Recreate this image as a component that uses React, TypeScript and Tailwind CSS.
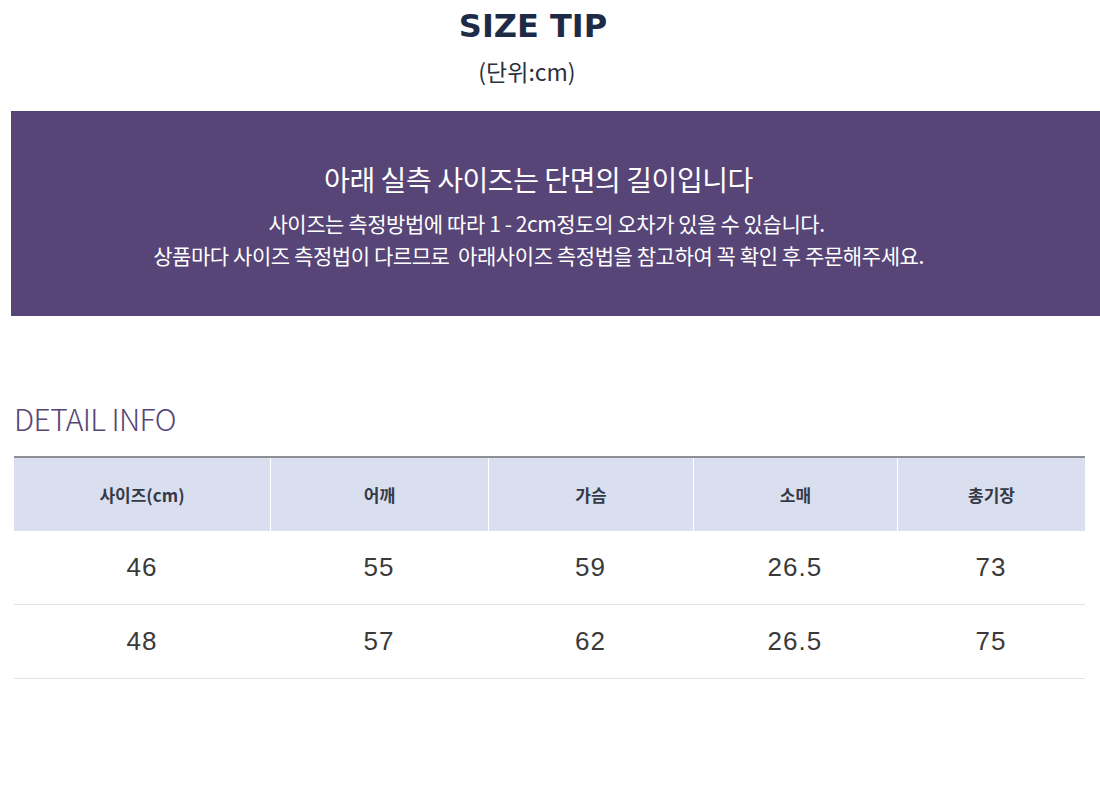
import React from "react";

const KR = "font-['Noto_Sans_CJK_KR','Noto_Sans',sans-serif]";

const headers = ["사이즈(cm)", "어깨", "가슴", "소매", "총기장"];
const rows = [
  ["46", "55", "59", "26.5", "73"],
  ["48", "57", "62", "26.5", "75"],
];

export default function App() {
  return (
    <div className="w-[1100px] min-h-[800px] bg-white overflow-hidden">
      <div className="w-[1066px] flex flex-col items-center pt-[10px]">
        <h1 className="font-['DejaVu_Sans',sans-serif] font-bold text-[32px] leading-[32px] text-[#1e2b46]">
          SIZE TIP
        </h1>
        <p className={`${KR} text-[23px] leading-[30px] mt-[14px] text-[#2b3040] pr-[12px]`}>
          (단위:cm)
        </p>
      </div>

      <div className="ml-[11px] mt-[25px] h-[205px] bg-[#574577] pr-[34px] flex flex-col items-center pt-[48px] text-white">
        <p className={`${KR} text-[28px] leading-[40px] tracking-[-0.015em]`}>
          아래 실측 사이즈는 단면의 길이입니다
        </p>
        <p className={`${KR} text-[21px] leading-[32px] mt-[8px] tracking-[-0.02em] pl-[16px]`}>
          사이즈는 측정방법에 따라 1 - 2cm정도의 오차가 있을 수 있습니다.
        </p>
        <p className={`${KR} text-[21px] leading-[32px] tracking-[-0.02em] whitespace-pre`}>
          상품마다 사이즈 측정법이 다르므로  아래사이즈 측정법을 참고하여 꼭 확인 후 주문해주세요.
        </p>
      </div>

      <h2 className={`${KR} font-light text-[30px] leading-[40px] text-[#574577] ml-[14px] mt-[82px] tracking-[-0.02em]`}>
        DETAIL INFO
      </h2>

      <div className="ml-[14px] mt-[18px] w-[1071px] border-t-2 border-[#8e8e96]">
        <div className="grid grid-cols-[256px_218px_205px_204px_188px] bg-[#d9dfef]">
          {headers.map((h, i) => (
            <div
              key={h}
              className={`${KR} h-[73px] flex items-center justify-center font-bold text-[17px] text-[#353a48] ${
                i > 0 ? "border-l border-white" : ""
              }`}
            >
              {h}
            </div>
          ))}
        </div>
        {rows.map((r, ri) => (
          <div
            key={ri}
            className="grid grid-cols-[256px_218px_205px_204px_188px] border-b border-[#e3e3e3]"
          >
            {r.map((v, i) => (
              <div
                key={i}
                className="h-[73px] flex items-center justify-center font-['Liberation_Sans',Arial,sans-serif] text-[26px] tracking-[0.04em] text-[#3a3a3a]"
              >
                {v}
              </div>
            ))}
          </div>
        ))}
      </div>
    </div>
  );
}
